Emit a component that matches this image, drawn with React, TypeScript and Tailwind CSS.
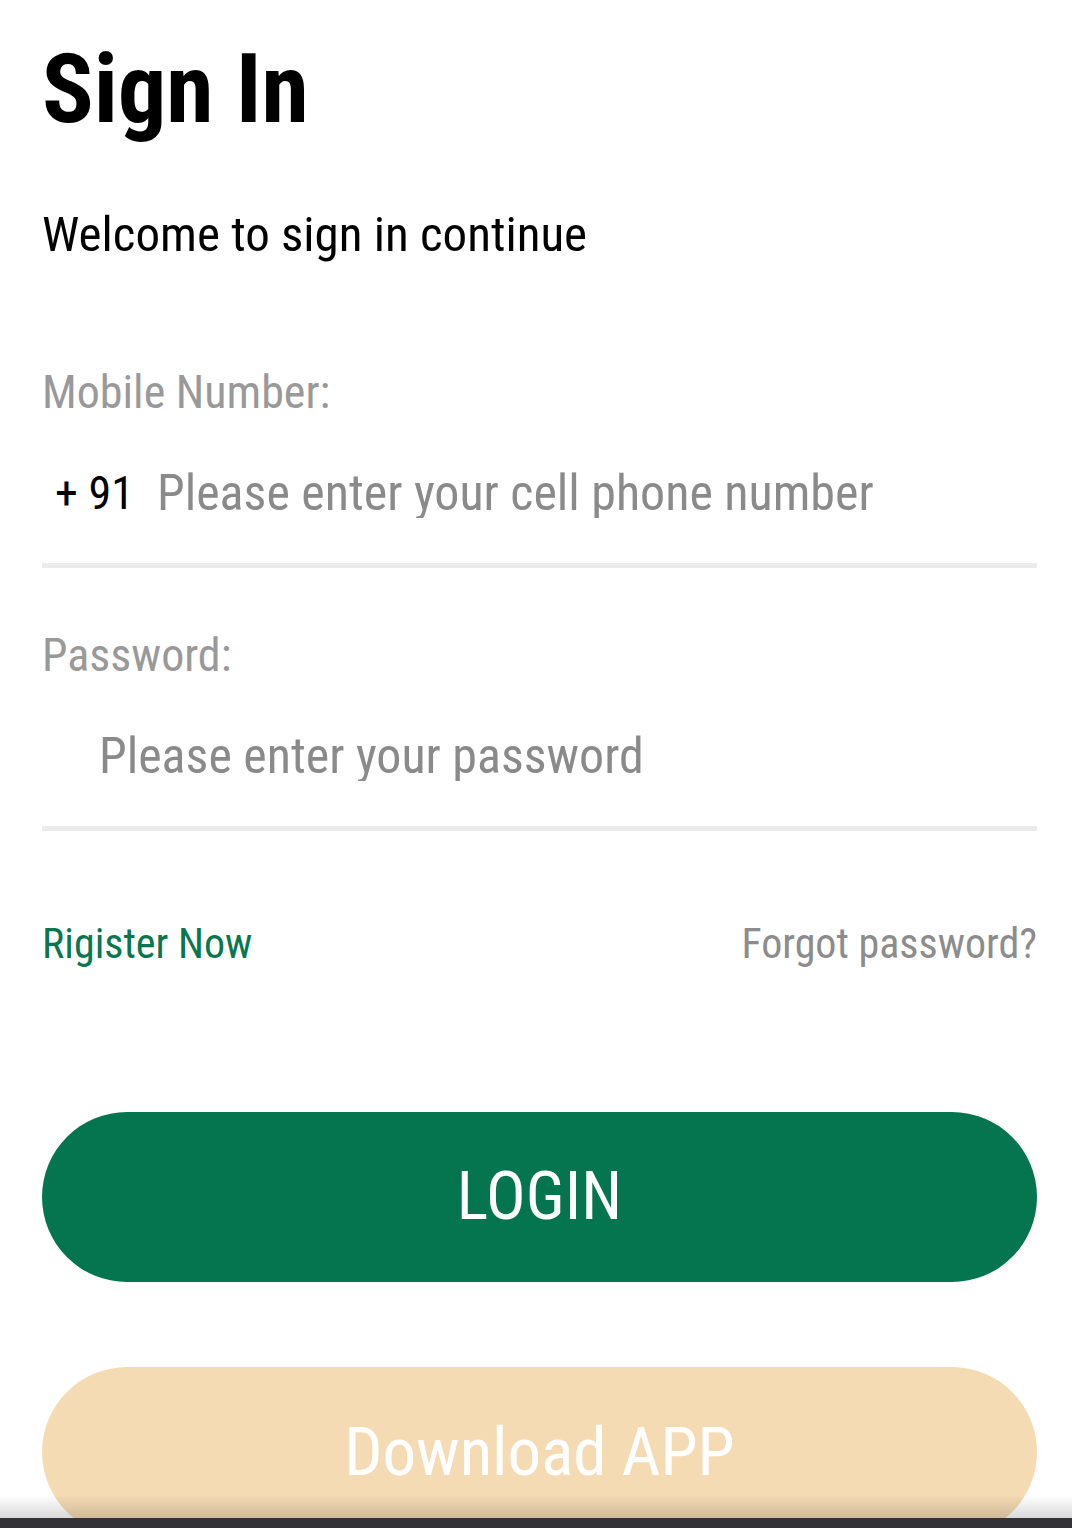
const font = "font-['Roboto_Condensed','Roboto',sans-serif]";

function Field({
  label,
  placeholder,
  prefix,
  type = "text",
}: {
  label: string;
  placeholder: string;
  prefix?: string;
  type?: string;
}) {
  return (
    <div className="flex flex-col">
      <label className="text-[46px] leading-none text-[#999999]">{label}</label>
      <div className="mt-[53px] flex h-[50px] items-center leading-none">
        {prefix ? (
          <span className="ml-[13px] w-[102px] shrink-0 text-[46px] text-black">{prefix}</span>
        ) : (
          <span className="w-[57px] shrink-0" />
        )}
        <input
          type={type}
          placeholder={placeholder}
          className={`${font} h-[50px] w-full bg-transparent p-0 text-[50px] leading-none text-black outline-none placeholder:text-[#8a8a8a]`}
        />
      </div>
      <div className="mt-[45px] h-[5px] w-full bg-[#ebebeb]" />
    </div>
  );
}

export default function App() {
  return (
    <div className={`${font} min-h-screen bg-white pl-[42px] pr-[35px] pt-[41px]`}>
      <h1 className="text-[96px] font-bold leading-none text-black">Sign In</h1>
      <p className="mt-[73px] text-[49px] leading-none text-black">Welcome to sign in continue</p>

      <div className="mt-[110px]">
        <Field label="Mobile Number:" prefix="+ 91" placeholder="Please enter your cell phone number" />
      </div>
      <div className="mt-[64px]">
        <Field label="Password:" type="password" placeholder="Please enter your password" />
      </div>

      <div className="mt-[92px] flex items-center justify-between text-[42px] leading-none">
        <a href="#" className="text-[#08764f]">Rigister Now</a>
        <a href="#" className="text-[#8c8c8c]">Forgot password?</a>
      </div>

      <button
        type="button"
        className="mt-[147px] flex h-[170px] w-full items-center justify-center rounded-full bg-[#05754f] text-[66px] leading-none text-white"
      >
        LOGIN
      </button>
      <button
        type="button"
        className="mt-[85px] flex h-[170px] w-full items-center justify-center rounded-full bg-[#f5dbb4] text-[67px] leading-none text-white"
      >
        Download APP
      </button>

      {/* system bar at the bottom */}
      <div className="pointer-events-none fixed inset-x-0 bottom-0">
        <div className="h-[23px] bg-gradient-to-b from-transparent to-black/15" />
        <div className="h-[10px] bg-[#333337]" />
      </div>
    </div>
  );
}
